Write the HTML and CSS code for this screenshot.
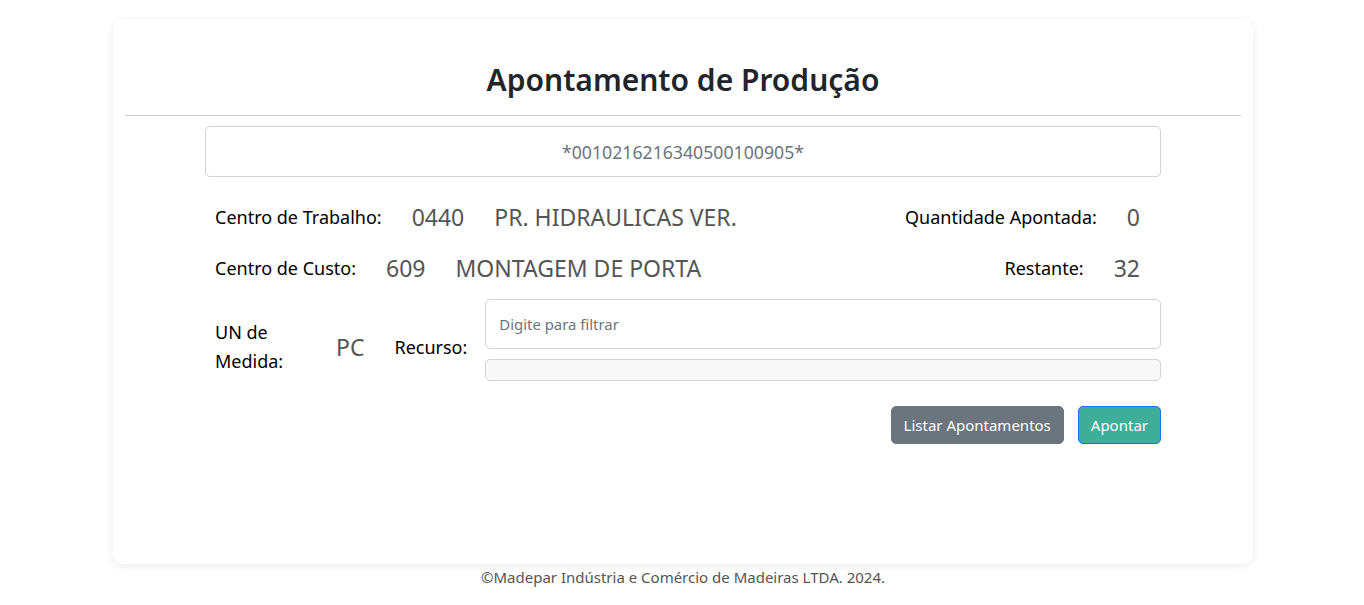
FILE: index.html
```html
<!DOCTYPE html>
<html lang="pt-BR">
<head>
<meta charset="utf-8">
<title>Apontamento de Produção</title>
<link rel="stylesheet" href="styles.css">
</head>
<body>
<main class="card">
  <h1 class="title">Apontamento de Produção</h1>
  <hr class="divider">
  <div class="content">
    <input class="code-input" type="text" value="*0010216216340500100905*">
    <div class="info-row">
      <div class="group">
        <span class="label">Centro de Trabalho:</span>
        <span class="value">0440</span>
        <span class="value">PR. HIDRAULICAS VER.</span>
      </div>
      <div class="group">
        <span class="label">Quantidade Apontada:</span>
        <span class="value">0</span>
      </div>
    </div>
    <div class="info-row">
      <div class="group">
        <span class="label">Centro de Custo:</span>
        <span class="value">609</span>
        <span class="value">MONTAGEM DE PORTA</span>
      </div>
      <div class="group">
        <span class="label">Restante:</span>
        <span class="value">32</span>
      </div>
    </div>
    <div class="resource-row">
      <span class="label un-label shifted">UN de Medida:</span>
      <span class="value shifted">PC</span>
      <span class="label shifted">Recurso:</span>
      <div class="resource-field">
        <input class="filter-input" type="text" placeholder="Digite para filtrar">
        <div class="result-box"></div>
      </div>
    </div>
    <div class="actions">
      <button class="btn btn-secondary" type="button">Listar Apontamentos</button>
      <button class="btn btn-primary" type="button">Apontar</button>
    </div>
  </div>
</main>
<footer class="footer">©Madepar Indústria e Comércio de Madeiras LTDA. 2024.</footer>
</body>
</html>
```

FILE: styles.css
```css
* { box-sizing: border-box; }
html, body { margin: 0; padding: 0; background: #fff; }
body {
  font-family: "Noto Sans", "Open Sans", sans-serif;
  color: #212529;
  padding-left: 2px;
}
.card {
  width: 1140px;
  height: 545px;
  margin: 19px auto 0;
  padding: 0 12px;
  background: #fff;
  border-radius: 10px;
  box-shadow: 0 2px 10px rgba(0,0,0,0.08);
}
.title {
  margin: 0;
  padding-top: 42px;
  height: 96px;
  text-align: center;
  font-size: 30px;
  font-weight: 600;
  line-height: 38px;
  color: #212529;
}
.divider {
  margin: 0;
  border: 0;
  border-top: 1px solid #cfcfcf;
}
.content {
  width: 956px;
  margin: 10px auto 0;
}
.code-input {
  display: block;
  width: 100%;
  height: 51px;
  border: 1px solid #ced4da;
  border-radius: 5px;
  text-align: center;
  font-family: inherit;
  font-size: 17.7px;
  color: #6c757d;
  outline: none;
}
.info-row {
  display: flex;
  justify-content: space-between;
  align-items: center;
  padding: 0 21px 0 10px;
  height: 51px;
}
.info-row:first-of-type { margin-top: 14px; }
.group {
  display: flex;
  align-items: center;
  gap: 30px;
}
.label {
  font-size: 18px;
  color: #000;
}
.value {
  font-size: 23px;
  color: #555;
}
.resource-row {
  display: flex;
  align-items: center;
  gap: 30px;
  padding-left: 10px;
  margin-top: 6px;
}
.shifted { padding-top: 13px; }
.un-label {
  width: 91px;
  line-height: 29px;
}
.resource-field {
  flex: 1;
  margin-left: -12px;
  display: flex;
  flex-direction: column;
  gap: 10px;
}
.filter-input {
  display: block;
  width: 100%;
  height: 50px;
  padding: 0 13px;
  border: 1px solid #ced4da;
  border-radius: 5px;
  font-family: inherit;
  font-size: 14.9px;
  outline: none;
}
.filter-input::placeholder { color: #6c757d; }
.result-box {
  height: 22px;
  border: 1px solid #ced4da;
  border-radius: 5px;
  background: #f8f8f8;
}
.actions {
  display: flex;
  justify-content: flex-end;
  gap: 14px;
  margin-top: 25px;
}
.btn {
  height: 38px;
  padding: 0 12px;
  border-radius: 5px;
  font-family: inherit;
  font-size: 15px;
  color: #fff;
  cursor: pointer;
}
.btn-secondary {
  background: #6c757d;
  border: 1px solid #6c757d;
}
.btn-primary {
  background: #3eae99;
  border: 1px solid #1a73f0;
}
.footer {
  text-align: center;
  font-size: 15px;
  color: #555;
  margin-top: 3px;
}
```
